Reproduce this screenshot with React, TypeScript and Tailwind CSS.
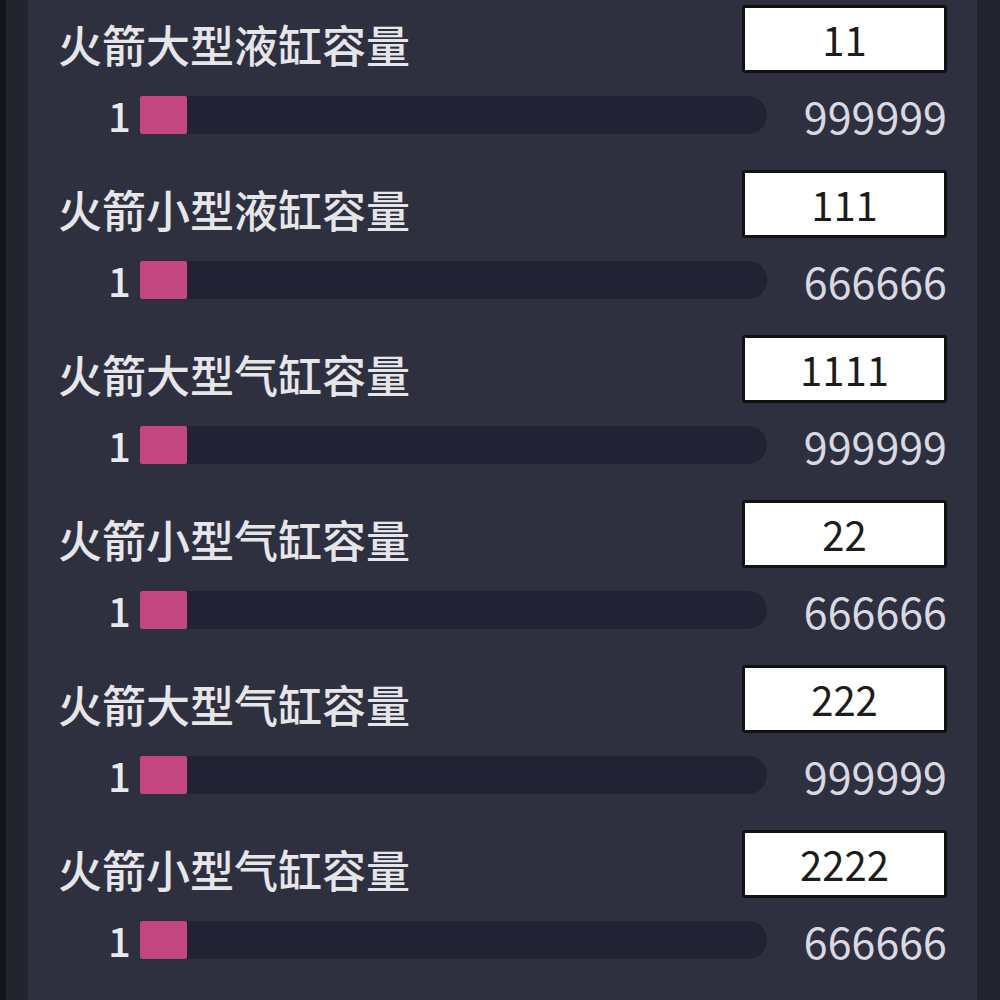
const rows = [
  { label: "火箭大型液缸容量", value: "11", max: "999999" },
  { label: "火箭小型液缸容量", value: "111", max: "666666" },
  { label: "火箭大型气缸容量", value: "1111", max: "999999" },
  { label: "火箭小型气缸容量", value: "22", max: "666666" },
  { label: "火箭大型气缸容量", value: "222", max: "999999" },
  { label: "火箭小型气缸容量", value: "2222", max: "666666" },
];

const font = { fontFamily: '"Noto Sans CJK SC", "Noto Sans", sans-serif' };

function CapacityRow({ label, value, max }: { label: string; value: string; max: string }) {
  return (
    <div className="mb-[35px]">
      <div className="flex h-[68px] items-center justify-between">
        <span className="pt-[10px] text-[44px] font-medium leading-none text-[#e6e6ea]">{label}</span>
        <div className="flex h-[68px] w-[205px] items-center justify-center rounded-[3px] border-[3px] border-[#111] bg-white text-[40px] leading-none text-[#1c1c1c]">
          {value}
        </div>
      </div>
      <div className="mt-[22px] flex h-[40px] items-center">
        <span className="ml-[50px] w-[32px] text-[40px] font-medium leading-none text-[#e8e8ee]">1</span>
        <div className="flex h-[38px] flex-1 items-center rounded-r-full bg-[#212335]">
          <div className="h-[38px] w-[47px] rounded-[2px] bg-[#c4467e]" />
        </div>
        <span className="ml-[34px] w-[146px] text-right text-[43px] leading-none text-[#d8d9e2]">{max}</span>
      </div>
    </div>
  );
}

export default function App() {
  return (
    <div className="flex h-[1000px] w-[1000px] overflow-hidden bg-[#2e3040]" style={font}>
      <div className="w-[28px] border-l-[6px] border-[#15161c] bg-[#23242e]" />
      <div className="flex-1 px-[30px] pt-[5px]">
        {rows.map((r, i) => (
          <CapacityRow key={i} {...r} />
        ))}
      </div>
      <div className="w-[23px] bg-[#23242e]" />
    </div>
  );
}
